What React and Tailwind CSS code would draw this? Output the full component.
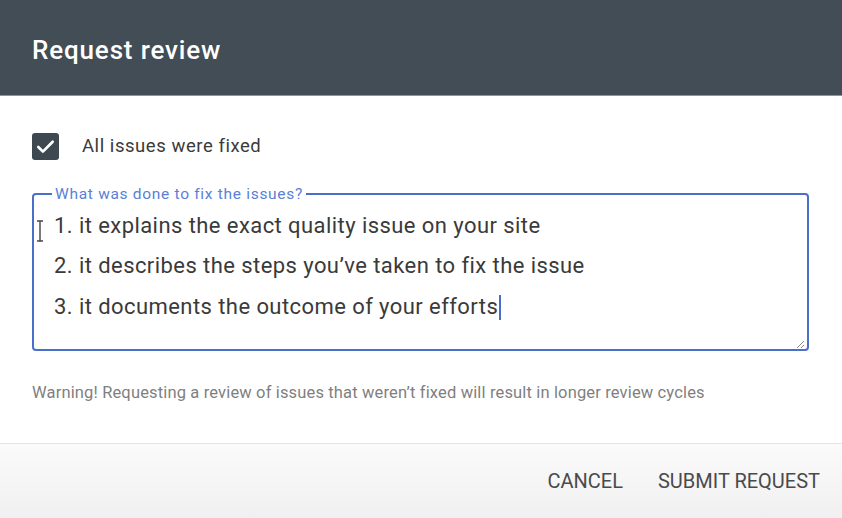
import React from 'react'

function CheckIcon() {
  return (
    <svg viewBox="0 0 24 24" className="h-[23px] w-[23px]" fill="none" stroke="white" strokeWidth="2.8" strokeLinecap="round" strokeLinejoin="round">
      <path d="M4.5 12.5l4.8 4.8L19.5 7" />
    </svg>
  )
}

export default function App() {
  return (
    <div className="flex h-[518px] w-[842px] flex-col bg-white font-['Roboto','Liberation_Sans',sans-serif]">
      {/* Header */}
      <div className="flex h-[96px] items-center bg-[#434d55] pl-[32px] pt-[5px] border-b border-[#8d959b]">
        <h1 className="text-[26px] font-medium text-white tracking-[0.85px]">Request review</h1>
      </div>

      {/* Body */}
      <div className="flex flex-1 flex-col px-[32px] pt-[37px]">
        <label className="flex items-center gap-[23px]">
          <span className="flex h-[27px] w-[27px] items-center justify-center rounded-[3px] bg-[#3e4850]">
            <CheckIcon />
          </span>
          <span className="text-[18.5px] tracking-[0.55px] text-[#3a3a3a]">All issues were fixed</span>
        </label>

        <fieldset className="mt-[25px] h-[165px] w-[777px] rounded-[4px] border-2 border-[#4a6fc9] px-[20px] pt-[4px]">
          <legend className="ml-[-2px] px-[3px] text-[15.5px] leading-[16px] tracking-[0.7px] text-[#5a80d6]">What was done to fix the issues?</legend>
          <div className="relative h-[143px]">
            <div className="text-[22px] leading-[40.5px] tracking-[0.43px] text-[#3a3a3a]">
              <div>1. it explains the exact quality issue on your site</div>
              <div>2. it describes the steps you’ve taken to fix the issue</div>
              <div className="flex items-center">
                3. it documents the outcome of your efforts
                <span className="ml-[1px] inline-block h-[25px] w-[1.5px] bg-[#4a6fc9]" />
              </div>
            </div>
            {/* I-beam mouse cursor */}
            <svg className="absolute left-[-19px] top-[14px]" width="10" height="22" viewBox="0 0 10 22" fill="none" stroke="#444" strokeWidth="1.4">
              <path d="M2 1h6M5 1v20M2 21h6" />
            </svg>
            {/* resize handle */}
            <svg className="absolute bottom-[0px] right-[-18px]" width="10" height="10" viewBox="0 0 10 10" stroke="#888" strokeWidth="1">
              <path d="M9 2L2 9M9 6L6 9" />
            </svg>
          </div>
        </fieldset>

        <p className="mt-[30px] whitespace-nowrap text-[16.5px] tracking-[0.15px] text-[#7f7f7f]">
          Warning! Requesting a review of issues that weren’t fixed will result in longer review cycles
        </p>
      </div>

      {/* Footer */}
      <div className="flex h-[75px] items-center justify-end gap-[35px] border-t border-[#e4e4e4] bg-gradient-to-b from-[#fbfbfb] to-[#f0f0f0] pr-[22px]">
        <button className="text-[20px] uppercase text-[#4a4a4a]">Cancel</button>
        <button className="text-[20px] uppercase text-[#4a4a4a]">Submit request</button>
      </div>
    </div>
  )
}
